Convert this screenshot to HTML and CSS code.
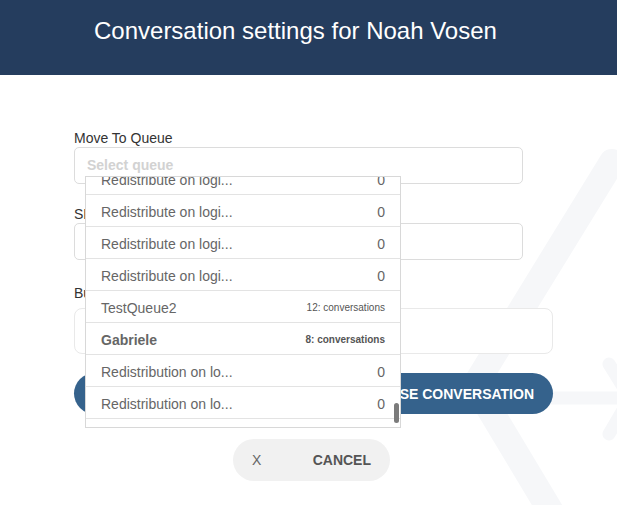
FILE: index.html
```html
<!DOCTYPE html>
<html lang="en">
<head>
    <meta charset="UTF-8">
    <meta name="viewport" content="width=device-width, initial-scale=1.0">
    <title>Conversation settings</title>
    <link rel="stylesheet" href="styles.css">
</head>
<body>
    <svg class="watermark" viewBox="0 0 617 505" aria-hidden="true">
        <path d="M612 162 L475 385 L562 530" />
        <path class="arrow" d="M540 398 L626 398 M609 364 L630 398 L609 434" />
    </svg>

    <div class="header">
        <h1>Conversation settings for Noah Vosen</h1>
    </div>

    <div class="settings">
        <div class="field">
            <label>Move To Queue</label>
            <div class="select-wrap">
                <div class="input select">Select queue</div>

                <div class="dropdown">
                    <ul class="queue-list">
                        <li><span>Redistribute on logi...</span><span>0</span></li>
                        <li><span>Redistribute on logi...</span><span>0</span></li>
                        <li><span>Redistribute on logi...</span><span>0</span></li>
                        <li><span>Redistribute on logi...</span><span>0</span></li>
                        <li><span>TestQueue2</span><span class="count">12: conversations</span></li>
                        <li class="current"><span>Gabriele</span><span class="count">8: conversations</span></li>
                        <li><span>Redistribution on lo...</span><span>0</span></li>
                        <li><span>Redistribution on lo...</span><span>0</span></li>
                        <li><span>Redistribution on lo...</span><span>0</span></li>
                    </ul>
                    <div class="thumb"></div>
                </div>
            </div>
        </div>

        <div class="field field-status">
            <label>SLA Policy</label>
            <div class="input"></div>
        </div>

        <div class="field field-note">
            <label>Business Unit</label>
            <div class="input input-wide"></div>
        </div>

        <button class="btn-close">CLOSE CONVERSATION</button>

        <button class="btn-cancel"><span class="x">X</span><span>CANCEL</span></button>
    </div>
</body>
</html>
```

FILE: styles.css
```css
body {
    font-family: "Liberation Sans", Arial, sans-serif;
    margin: 0;
    background-color: #fff;
    position: relative;
    height: 505px;
    overflow: hidden;
}

/* faint logo behind the form */
.watermark {
    position: absolute;
    top: 0;
    left: 0;
    width: 617px;
    height: 505px;
    z-index: 0;
}

.watermark path {
    fill: none;
    stroke: #f6f7f9;
    stroke-width: 26;
    stroke-linecap: round;
    stroke-linejoin: round;
}

.watermark path.arrow {
    stroke-width: 13;
}

.header {
    position: relative;
    z-index: 1;
    height: 75px;
    box-sizing: border-box;
    padding: 17px 0 0 94px;
    background-color: #253d5e;
    color: #fff;
}

.header h1 {
    margin: 0;
    font-size: 24px;
    font-weight: normal;
    line-height: 28px;
}

/* form */
.settings {
    position: relative;
    z-index: 1;
    width: 479px;
    padding: 55px 0 0 74px;
}

.field label {
    display: block;
    font-size: 14px;
    line-height: 16px;
    color: #333;
    margin-bottom: 1px;
}

.field-status {
    margin-top: 22px;
}

.field-note {
    margin-top: 25px;
}

.field-note label {
    margin-bottom: 7px;
}

.input {
    box-sizing: border-box;
    width: 449px;
    height: 37px;
    border: 1px solid #dcdcdc;
    border-radius: 5px;
    background-color: #fff;
}

.input-wide {
    width: 479px;
    height: 46px;
    border-color: #e9e9e9;
    border-radius: 8px;
}

.select {
    padding-left: 12px;
    font-size: 14px;
    font-weight: bold;
    line-height: 35px;
    color: #d2d2d2;
}

.select-wrap {
    position: relative;
}

.dropdown {
    position: absolute;
    top: 29px;
    left: 11px;
    z-index: 2;
    width: 316px;
    height: 252px;
    box-sizing: border-box;
    border: 1px solid #d8d8d8;
    background-color: #fff;
    overflow: hidden;
}

.queue-list {
    list-style-type: none;
    margin: -14px 0 0 0;
    padding: 0;
}

.queue-list li {
    display: flex;
    justify-content: space-between;
    align-items: center;
    height: 29px;
    padding: 2px 15px 0 15px;
    border-bottom: 1px solid #e3e3e3;
    font-size: 14px;
    color: #666;
}

.queue-list li.current {
    font-weight: bold;
}

.queue-list .count {
    font-size: 10px;
    color: #555;
}

.thumb {
    position: absolute;
    right: 1px;
    top: 226px;
    width: 5px;
    height: 20px;
    border-radius: 3px;
    background-color: #7b7b7b;
}

/* buttons */
.btn-close {
    display: flex;
    justify-content: flex-end;
    align-items: center;
    box-sizing: border-box;
    width: 479px;
    height: 41px;
    margin-top: 19px;
    padding: 0 19px 0 0;
    border: none;
    border-radius: 21px;
    background-color: #35628c;
    color: #fff;
    font-family: inherit;
    font-size: 14px;
    font-weight: bold;
}

.btn-cancel {
    display: flex;
    justify-content: space-between;
    align-items: center;
    box-sizing: border-box;
    width: 157px;
    height: 42px;
    margin: 25px 0 0 159px;
    padding: 0 19px;
    border: none;
    border-radius: 21px;
    background-color: #f1f1f1;
    color: #555;
    font-family: inherit;
    font-size: 14px;
    font-weight: bold;
}

.btn-cancel .x {
    font-weight: normal;
    color: #666;
}
```
